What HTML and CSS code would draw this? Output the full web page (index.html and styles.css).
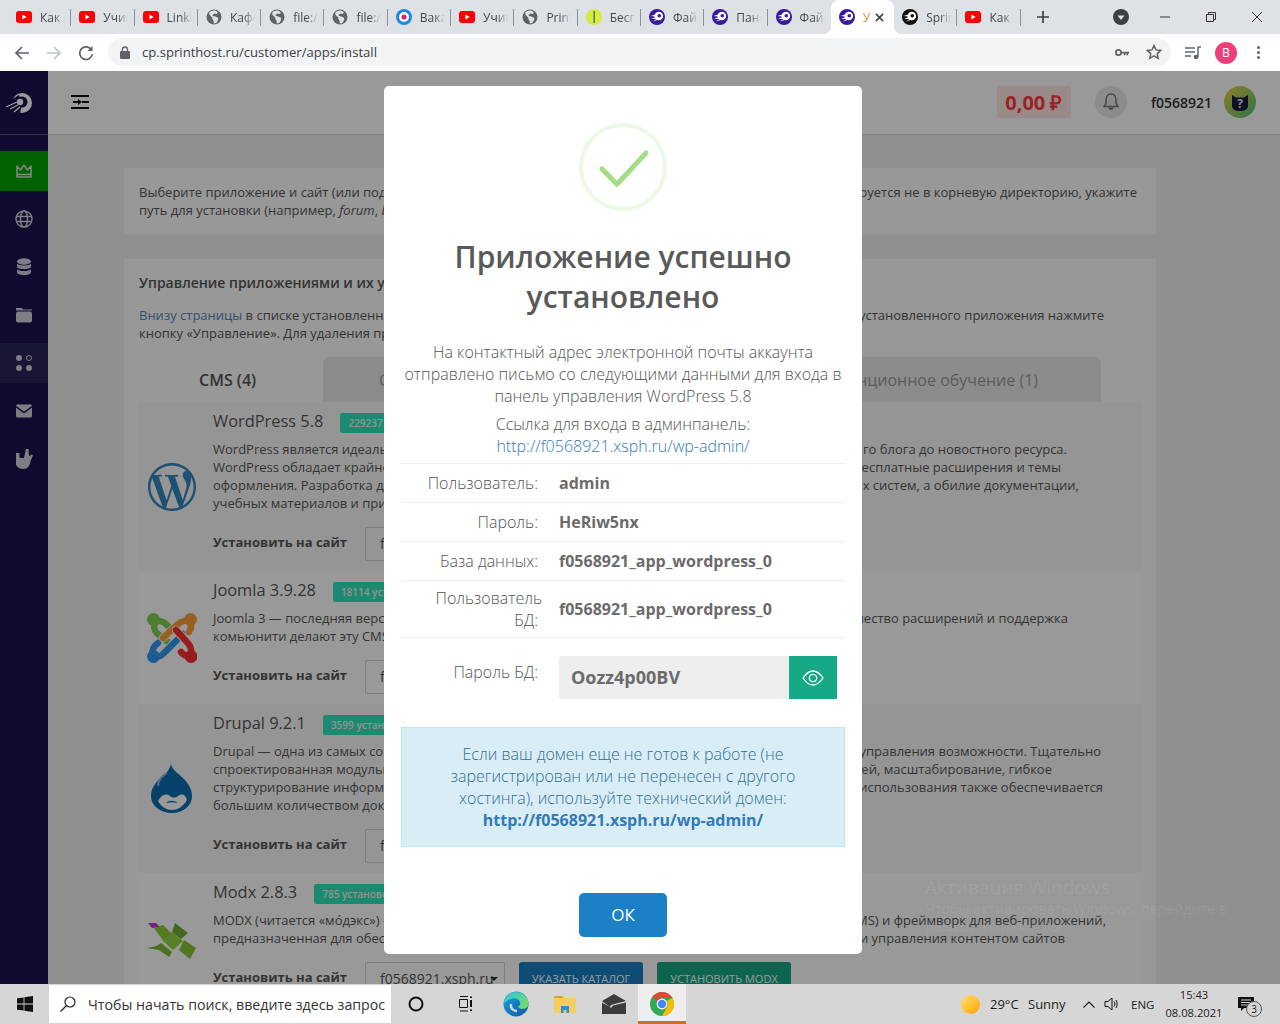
FILE: index.html
```html
<!DOCTYPE html>
<html lang="ru">
<head>
<meta charset="utf-8">
<title>Sprinthost</title>
<link rel="stylesheet" href="styles.css">
</head>
<body>
<svg class="sprite" width="0" height="0" aria-hidden="true">
  <symbol id="yt" viewBox="0 0 16 16"><rect x="0" y="2" width="16" height="12" rx="3" fill="#f00"/><path d="M6.400 5.400v5.200L10.600 8z" fill="#fff"/></symbol>
  <symbol id="globe" viewBox="0 0 16 16"><circle cx="8" cy="8" r="7.500" fill="#5f6368"/><path d="M8 1.500c-2 0-3.600.8-4.800 2.200l.3 2.300 2.700 2.400.3 2 1 1.200.3 3c1 0 2-.3 2.800-.8l1.300-2.600.4-2.200-2.800-1.600-2.300-.3-.8-1.100 1.100-.7 1-.9 2.400.5.9-1.400C10.700 2 9.400 1.500 8 1.500z" fill="#dee1e6"/></symbol>
  <symbol id="target" viewBox="0 0 16 16"><circle cx="8" cy="8" r="8" fill="#1e88e5"/><circle cx="8" cy="8" r="5" fill="#fff"/><circle cx="8" cy="8" r="2.500" fill="#e91e63"/></symbol>
  <symbol id="lime" viewBox="0 0 16 16"><circle cx="8" cy="8" r="8" fill="#d4ec3a"/><rect x="7.500" y="2" width="1.300" height="12" fill="#4a5a9a"/></symbol>
  <symbol id="comet" viewBox="0 0 16 16"><circle cx="8" cy="8" r="8" fill="currentColor"/><circle cx="9.800" cy="7" r="4.300" fill="#fff"/><circle cx="10.300" cy="6.800" r="1.800" fill="currentColor"/><path d="M1.500 7l5-1.500-.5 2zM2 10l5-2-.5 2zM4 12.500l4-3 .3 1.500z" fill="#fff"/></symbol>
</svg>

<div class="tabstrip">
  <div class="tab"><svg class="fav"><use href="#yt"/></svg><span class="tab-t">Как сделать</span></div>
  <div class="tab"><svg class="fav"><use href="#yt"/></svg><span class="tab-t">Учим</span></div>
  <div class="tab"><svg class="fav"><use href="#yt"/></svg><span class="tab-t">Linkin</span></div>
  <div class="tab"><svg class="fav"><use href="#globe"/></svg><span class="tab-t">Кафе</span></div>
  <div class="tab"><svg class="fav"><use href="#globe"/></svg><span class="tab-t">file:///</span></div>
  <div class="tab"><svg class="fav"><use href="#globe"/></svg><span class="tab-t">file:///</span></div>
  <div class="tab"><svg class="fav"><use href="#target"/></svg><span class="tab-t">Ваканс</span></div>
  <div class="tab"><svg class="fav"><use href="#yt"/></svg><span class="tab-t">Учим</span></div>
  <div class="tab"><svg class="fav"><use href="#globe"/></svg><span class="tab-t">Print</span></div>
  <div class="tab"><svg class="fav"><use href="#lime"/></svg><span class="tab-t">Бесп</span></div>
  <div class="tab"><svg class="fav purple"><use href="#comet"/></svg><span class="tab-t">Файл</span></div>
  <div class="tab"><svg class="fav purple"><use href="#comet"/></svg><span class="tab-t">Панель</span></div>
  <div class="tab pre-active"><svg class="fav purple"><use href="#comet"/></svg><span class="tab-t">Файл</span></div>
  <div class="tab active"><svg class="fav purple"><use href="#comet"/></svg><span class="tab-a">У</span><svg class="tab-x" viewBox="0 0 10 10"><path d="M1 1l8 8M9 1l-8 8"/></svg></div>
  <div class="tab"><svg class="fav black"><use href="#comet"/></svg><span class="tab-t">Sprint</span></div>
  <div class="tab"><svg class="fav"><use href="#yt"/></svg><span class="tab-t">Как с</span></div>
  <svg class="newtab" viewBox="0 0 14 14"><path d="M7 1v12M1 7h12"/></svg>
  <svg class="tabsearch" viewBox="0 0 16 16"><circle cx="8" cy="8" r="8" fill="#3c4043"/><path d="M4.500 6.500h7L8 11z" fill="#dee1e6"/></svg>
  <div class="winbtn"><svg viewBox="0 0 10 10"><path d="M0 5h10"/></svg></div>
  <div class="winbtn"><svg viewBox="0 0 10 10"><path d="M.5 2.500h7v7h-7zM2.500 2.500V.5h7v7h-2"/></svg></div>
  <div class="winbtn"><svg viewBox="0 0 10 10"><path d="M0 0l10 10M10 0L0 10"/></svg></div>
</div>

<div class="toolbar">
  <svg class="nav-ic" viewBox="0 0 16 16"><path d="M15 8H2M8 2L2 8l6 6"/></svg>
  <svg class="nav-ic off" viewBox="0 0 16 16"><path d="M1 8h13M8 2l6 6-6 6"/></svg>
  <svg class="nav-ic" viewBox="0 0 16 16"><path d="M13.500 5A6.300 6.300 0 1 0 14.300 9"/><path class="solid" d="M14.500 1v5h-5z"/></svg>
  <div class="omnibox">
    <svg class="lock" viewBox="0 0 10 13"><path d="M2.500 5V3.500a2.500 2.500 0 0 1 5 0V5" fill="none" stroke="#5f6368" stroke-width="1.300"/><rect y="5" width="10" height="8" rx="1" fill="#5f6368"/></svg>
    <span class="url">cp.sprinthost.ru/customer/apps/install</span>
    <svg class="key" viewBox="0 0 16 10"><circle cx="4" cy="5" r="3" fill="none" stroke="#5f6368" stroke-width="2"/><path d="M7 4h9v2h-1v2h-2V6h-1v2h-2V6H7z" fill="#5f6368"/></svg>
    <svg class="star" viewBox="0 0 16 16"><path d="M8 1.500l2 4.400 4.700.5-3.500 3.200 1 4.700L8 11.900l-4.200 2.400 1-4.700L1.300 6.400 6 5.900z"/></svg>
  </div>
  <svg class="media" viewBox="0 0 16 14"><path d="M0 2h10M0 6h10M0 10h6" stroke="#5f6368" stroke-width="1.500"/><path d="M13 1v10" stroke="#5f6368" stroke-width="1.500"/><path d="M13 1h3" stroke="#5f6368" stroke-width="1.500"/><circle cx="11" cy="11" r="2.300" fill="#5f6368"/></svg>
  <div class="profile">B</div>
  <div class="dots"><i></i><i></i><i></i></div>
</div>

<div class="page">
  <aside class="sidebar">
    <div class="side-logo">
      <svg viewBox="0 0 28 22" width="28" height="22"><circle cx="17" cy="11" r="10" fill="#fff"/><path d="M6 8l8-5 3 9-2 9-9-2z" fill="#19124e"/><circle cx="17" cy="10" r="5.500" fill="#19124e"/><circle cx="15" cy="10" r="3.200" fill="#fff"/><path d="M1 15l11-5M5 17l8-4M9 20l6-5" stroke="#fff" stroke-width="1.300"/></svg>
    </div>
    <nav class="side-nav">
      <div class="side-item on"><svg class="crown" viewBox="0 0 16 14"><path d="M1 2l3.500 4L8 1l3.500 5L15 2v11H1zM1 10.500h14" fill="none" stroke="#d5e8d5" stroke-width="1.500" stroke-linejoin="round"/></svg></div>
      <div class="side-item"><svg class="wide" viewBox="0 0 18 18"><g fill="none" stroke="#d0d0da" stroke-width="1.500"><circle cx="9" cy="9" r="8"/><ellipse cx="9" cy="9" rx="3.500" ry="8"/><path d="M1 6.500h16M1 11.500h16"/></g></svg></div>
      <div class="side-item"><svg viewBox="0 0 16 18"><ellipse cx="8" cy="3.500" rx="7" ry="3.300" fill="#d0d0da"/><path d="M1 5.500c1 2.500 13 2.500 14 0V9c-1 2.800-13 2.800-14 0zM1 11c1 2.700 13 2.700 14 0v3.500c-1 3.500-13 3.500-14 0z" fill="#d0d0da"/></svg></div>
      <div class="side-item"><svg viewBox="0 0 16 16"><path d="M0 1h6l1 1.500h9v1H0z" fill="#d0d0da"/><rect y="4.500" width="16" height="11" rx="2" fill="#d0d0da"/></svg></div>
      <div class="side-item hover"><svg viewBox="0 0 16 16"><circle cx="3" cy="3" r="3" fill="#d0d0da"/><circle cx="13" cy="3" r="2.500" fill="none" stroke="#d0d0da"/><circle cx="3" cy="13" r="3" fill="#d0d0da"/><circle cx="13" cy="13" r="3" fill="#d0d0da"/></svg></div>
      <div class="side-item"><svg viewBox="0 0 16 13"><rect width="16" height="13" rx="1.500" fill="#d0d0da"/><path d="M0 2l8 6 8-6" fill="none" stroke="#19124e" stroke-width="1.400"/></svg></div>
      <div class="side-item"><svg class="hand" viewBox="0 0 17 20"><path d="M0 4h3.500v4.500c1.500.6 3 .6 4.500.3L10 0h2.500l.5 7 3-1.500 1 1-2.500 5.500c-.5 4.500-3 8-7 8-4.500 0-8-2.500-8-7z" fill="#d0d0da"/></svg></div>
    </nav>
  </aside>

  <div class="main">
    <header class="topbar">
      <svg class="burger" viewBox="0 0 18 14"><path d="M0 1h18M0 13h18M11 7h7M2 7h6" stroke="#111" stroke-width="2"/><path d="M7 4l4 3-4 3z" fill="#111"/></svg>
      <div class="balance">0,00 ₽</div>
      <div class="bell"><svg viewBox="0 0 16 20" width="16" height="20"><path d="M8 2c3 0 5 2.500 5 6v3.500l2 3H1l2-3V8c0-3.500 2-6 5-6z" fill="none" stroke="#777" stroke-width="1.500"/><path d="M5.500 15.500h5a2.500 2.500 0 0 1-5 0z" fill="#777"/></svg></div>
      <div class="user">f0568921</div>
      <div class="avatar"><svg viewBox="0 0 32 32" width="32" height="32"><path d="M8 9l4 2.500h8L24 9v11c0 3-3 5-8 5s-8-2-8-5z" fill="#1c1c40"/><text class="avatar-q" x="16" y="22" text-anchor="middle">?</text></svg></div>
    </header>

    <div class="content">
      <section class="card">
        <div class="line pr4"><span>Выберите приложение и сайт (или под</span><span>ируется не в корневую директорию, укажите</span></div>
        <div class="line"><span>путь для установки (например, <em>forum</em>, <em>blog</em>)</span></div>
      </section>

      <section class="card tall">
        <h2 class="card-h">Управление приложениями и их установка</h2>
        <div class="line pr37"><span><a class="lnk">Внизу страницы</a> в списке установленных</span><span>установленного приложения нажмите</span></div>
        <div class="line"><span>кнопку «Управление». Для удаления приложения</span></div>

        <div class="tabs">
          <div class="ptab on">CMS (4)</div>
          <div class="ptab mid">С</div>
          <div class="ptab end">Дистанционное обучение (1)</div>
        </div>

        <article class="app alt">
          <div class="app-logo">
            <svg viewBox="0 0 24 24" width="48" height="48"><path fill="#3285be" d="M21.469 6.825c.84 1.537 1.318 3.3 1.318 5.175 0 3.979-2.156 7.456-5.363 9.325l3.295-9.527c.615-1.54.82-2.771.82-3.864 0-.405-.026-.78-.07-1.11m-7.981.105c.647-.03 1.232-.105 1.232-.105.582-.075.514-.93-.067-.899 0 0-1.755.135-2.88.135-1.064 0-2.85-.15-2.85-.15-.585-.03-.661.855-.075.885 0 0 .54.061 1.125.09l1.68 4.605-2.37 7.08L5.354 6.9c.649-.03 1.234-.1 1.234-.1.585-.075.516-.93-.065-.896 0 0-1.746.138-2.874.138-.2 0-.438-.008-.69-.015C4.911 3.15 8.235 1.215 12 1.215c2.809 0 5.365 1.072 7.286 2.833-.046-.003-.091-.009-.141-.009-1.06 0-1.812.923-1.812 1.914 0 .89.513 1.643 1.06 2.531.411.72.89 1.643.89 2.977 0 .915-.354 1.994-.821 3.479l-1.075 3.585-3.9-11.61.001.014zM12 22.784c-1.059 0-2.081-.153-3.048-.437l3.237-9.406 3.315 9.087c.024.053.05.101.078.149-1.12.393-2.325.609-3.582.609M1.211 12c0-1.564.336-3.05.935-4.39L7.29 21.709C3.694 19.96 1.212 16.271 1.211 12M12 0C5.385 0 0 5.385 0 12s5.385 12 12 12 12-5.385 12-12S18.615 0 12 0"/></svg>
          </div>
          <div class="app-body">
            <div class="app-head"><h3>WordPress 5.8</h3><span class="badge">229237 установок</span></div>
            <div class="line pr74"><span>WordPress является идеальной</span><span>го блога до новостного ресурса.</span></div>
            <div class="line pr80"><span>WordPress обладает крайне</span><span>бесплатные расширения и темы</span></div>
            <div class="line pr62"><span>оформления. Разработка для</span><span>х систем, а обилие документации,</span></div>
            <div class="line"><span>учебных материалов и примеров</span></div>
            <div class="install"><b>Установить на сайт</b><div class="sel">f0568921.xsph.ru</div></div>
          </div>
        </article>

        <article class="app">
          <div class="app-logo">
            <svg viewBox="0 0 50 50" width="50" height="50"><g fill="none" stroke-linecap="round">
              <path d="M21 13C17 8 12 7 9 9 6 13 7 18 11 21l10 8" stroke="#7fd050" stroke-width="6.500"/>
              <path d="M11 30c-4 3-6 7-5 10 3 4 7 4 10 1l20-20" stroke="#fff" stroke-width="8.500"/>
              <path d="M11 30c-4 3-6 7-5 10 3 4 7 4 10 1l20-20" stroke="#3398f0" stroke-width="6.500"/>
              <path d="M16 25l14-13c5-5 10-5 12-3 3 3 2 7 0 10" stroke="#fff" stroke-width="8.500"/>
              <path d="M16 25l14-13c5-5 10-5 12-3 3 3 2 7 0 10" stroke="#ff9f3a" stroke-width="6.500"/>
              <path d="M29 17l10 11c4 4 6 8 5 12-3 4-7 3-10-1" stroke="#fff" stroke-width="8.500"/>
              <path d="M29 17l10 11c4 4 6 8 5 12-3 4-7 3-10-1" stroke="#ff2e2e" stroke-width="6.500"/></g>
              <circle cx="6.500" cy="6.500" r="6.500" fill="#7fd050"/><circle cx="43.500" cy="6.500" r="6.500" fill="#ff9f3a"/><circle cx="44" cy="43.500" r="6.500" fill="#ff2e2e"/><circle cx="6.500" cy="43.500" r="6.500" fill="#3398f0"/></svg>
          </div>
          <div class="app-body">
            <div class="app-head"><h3>Joomla 3.9.28</h3><span class="badge">18114 установок</span></div>
            <div class="line pr73"><span>Joomla 3 — последняя версия</span><span>чество расширений и поддержка</span></div>
            <div class="line"><span>комьюнити делают эту CMS</span></div>
            <div class="install"><b>Установить на сайт</b><div class="sel">f0568921.xsph.ru</div></div>
          </div>
        </article>

        <article class="app alt">
          <div class="app-logo">
            <svg viewBox="0 0 44 50" width="44" height="50"><path d="M21 0c1 6 7 9 13 15 5 5 8 11 8 17 0 10-9 17-20 17S1 42 1 32c0-7 4-13 9-17 5-4 9-8 11-15z" fill="#0a6fb0"/><path d="M8 37c3-6 8-8 12-5 3 2 5 2 8 0 4-3 8-1 9 4-4 7-10 10-15 10s-11-3-14-9z" fill="#fff"/><path d="M16 39c3-3 8-3 12 0-4-1-8-1-12 0z" fill="#0a6fb0"/><path d="M17 9c-5 3-9 8-9 13" fill="none" stroke="#7fb6da" stroke-width="2"/></svg>
          </div>
          <div class="app-body">
            <div class="app-head"><h3>Drupal 9.2.1</h3><span class="badge">3599 установок</span></div>
            <div class="line pr40"><span>Drupal — одна из самых современных</span><span>управления возможности. Тщательно</span></div>
            <div class="line pr89"><span>спроектированная модульная</span><span>ей, масштабирование, гибкое</span></div>
            <div class="line pr38"><span>структурирование информации</span><span>использования также обеспечивается</span></div>
            <div class="line"><span>большим количеством документации</span></div>
            <div class="install"><b>Установить на сайт</b><div class="sel">f0568921.xsph.ru</div></div>
          </div>
        </article>

        <article class="app">
          <div class="app-logo">
            <svg viewBox="0 0 50 38" width="50" height="38"><path d="M1 2h8l4 4-8 1z" fill="#c23ad8"/><path d="M7 7l9-3 9 9-8 8z" fill="#8ccc3c"/><path d="M28 2l13 10-7 6-9-7z" fill="#6fb034"/><path d="M25 11l11 9-10 9-10-9z" fill="#92d644"/><path d="M37 19l12 8-6 11-11-9z" fill="#86c63a"/><path d="M14 22l11 9-3 5-10-7-12-2c4-1 10-1 14-5z" fill="#7cbc36"/></svg>
          </div>
          <div class="app-body">
            <div class="app-head"><h3>Modx 2.8.3</h3><span class="badge">785 установок</span></div>
            <div class="line pr35"><span>MODX (читается «мо́дэкс») — это</span><span>(CMS) и фреймворк для веб-приложений,</span></div>
            <div class="line pr76"><span>предназначенная для обеспечения</span><span>и управления контентом сайтов</span></div>
            <div class="install"><b>Установить на сайт</b><div class="sel">f0568921.xsph.ru<i class="caret"></i></div><button class="btn blue">Указать каталог</button><button class="btn teal">Установить MODX</button></div>
          </div>
        </article>
      </section>
    </div>
  </div>

  <div class="overlay">
    <div class="modal">
      <svg class="okicon" viewBox="0 0 88 88" width="88" height="88"><circle cx="44" cy="44" r="42" fill="none" stroke="#edf8e7" stroke-width="4"/><path d="M23 46l15 15.300L67 30" fill="none" stroke="#a5dc86" stroke-width="5" stroke-linecap="round" stroke-linejoin="round"/></svg>
      <h1 class="m-title">Приложение успешно установлено</h1>
      <p class="m-p first">На контактный адрес электронной почты аккаунта отправлено письмо со следующими данными для входа в панель управления WordPress 5.8</p>
      <p class="m-p">Ссылка для входа в админпанель:<br><a class="m-link">http://f0568921.xsph.ru/wp-admin/</a></p>
      <div class="rows">
        <div class="row"><div class="r-l">Пользователь:</div><div class="r-v">admin</div></div>
        <div class="row"><div class="r-l">Пароль:</div><div class="r-v">HeRiw5nx</div></div>
        <div class="row"><div class="r-l">База данных:</div><div class="r-v">f0568921_app_wordpress_0</div></div>
        <div class="row two"><div class="r-l"><span class="hang">Пользователь</span><br>БД:</div><div class="r-v">f0568921_app_wordpress_0</div></div>
        <div class="row pass"><div class="r-l">Пароль БД:</div>
          <div class="passbox"><div class="passval">Oozz4p00BV</div><div class="eye"><svg viewBox="0 0 22 16" width="22" height="16"><path d="M1 8c3-4.500 6.500-7 10-7s7 2.500 10 7c-3 4.500-6.500 7-10 7S4 12.500 1 8z" fill="none" stroke="#fff" stroke-width="1.300"/><circle cx="11" cy="8" r="3.700" fill="none" stroke="#fff" stroke-width="1.300"/></svg></div></div>
        </div>
      </div>
      <div class="info">Если ваш домен еще не готов к работе (не зарегистрирован или не перенесен с другого хостинга), используйте технический домен:<br><a class="info-link">http://f0568921.xsph.ru/wp-admin/</a></div>
      <button class="ok">ОК</button>
    </div>
  </div>

  <div class="watermark">
    <div class="wm-h">Активация Windows</div>
    <div class="wm-t">Чтобы активировать Windows, перейдите в<br>раздел "Параметры".</div>
  </div>
</div>

<footer class="taskbar">
  <div class="start"><svg viewBox="0 0 16 16" width="16" height="16"><path d="M0 2.300l6.600-.9v6.200H0zM7.400 1.300L16 0v7.600H7.400zM0 8.400h6.600v6.200L0 13.700zM7.400 8.400H16V16l-8.600-1.200z" fill="#111"/></svg></div>
  <div class="search"><svg viewBox="0 0 16 16" width="16" height="16"><circle cx="10" cy="6" r="5" fill="none" stroke="#222" stroke-width="1.200"/><path d="M6.300 9.700L.5 15.500" stroke="#222" stroke-width="1.300"/></svg><span>Чтобы начать поиск, введите здесь запрос</span></div>
  <div class="tb-app cortana"><svg viewBox="0 0 16 16" width="16" height="16"><circle cx="8" cy="8" r="6.500" fill="none" stroke="#111" stroke-width="2"/></svg></div>
  <div class="tb-app tview"><svg viewBox="0 0 16 16" width="16" height="16"><path d="M3 .5h8M2.500 3.500h8v8h-8zM3 15h8" fill="none" stroke="#111"/><path d="M13 .5h2v1.500h-2zM13 4h2v7h-2zM13 13.500h2V15h-2z" fill="#111"/></svg></div>
  <div class="tb-app"><svg viewBox="0 0 26 26" width="26" height="26"><defs><linearGradient id="edge" x1="0" y1="0" x2="1" y2="1"><stop offset="0" stop-color="#1ba0e2"/><stop offset="1" stop-color="#0c59a4"/></linearGradient><linearGradient id="edge2" x1="0" y1="0" x2="1" y2="1"><stop offset="0" stop-color="#2fc6d8"/><stop offset="1" stop-color="#7fe05a"/></linearGradient></defs><circle cx="13" cy="13" r="12.500" fill="url(#edge)"/><path d="M13 1c7 0 12 5 12.500 11 .3 4-2.500 6-6 6-2 0-4-1-4.500-2.500 3-1 3.500-5.500-1-7.500C9 6.500 3 9 1 13 1.500 6 6.500 1 13 1z" fill="url(#edge2)"/><path d="M8 13c-1 4 2 7 6 7" fill="none" stroke="#d6d6d6" stroke-width="2.500"/></svg></div>
  <div class="tb-app"><svg viewBox="0 0 22 18" width="22" height="18"><path d="M0 2a1 1 0 0 1 1-1h7l2 2H0z" fill="#d8a21e"/><rect y="3" width="22" height="15" rx="1" fill="#f4cf5c"/><path d="M7 11h8v7h-2.500v-3h-3v3H7z" fill="#2d8fd8"/></svg></div>
  <div class="tb-app"><svg viewBox="0 0 24 20" width="24" height="20"><path d="M0 7l12-7 12 7-15 4-1 2z" fill="#3c3c3c"/><path d="M0 8.500l8 4.500 1 1 2-2.500L24 8.500V20H0z" fill="#3c3c3c"/></svg></div>
  <div class="tb-app chrome"><svg viewBox="0 0 24 24" width="24" height="24"><circle cx="12" cy="12" r="12" fill="#34a853"/><path d="M12 0a12 12 0 0 1 10.400 6H12a6 6 0 0 0-5.200 3L2.500 4.700A12 12 0 0 1 12 0z" fill="#ea4335"/><path d="M22.400 6A12 12 0 0 1 12 24l4.800-8.500A6 6 0 0 0 17 9z" fill="#fbbc05"/><circle cx="12" cy="12" r="5.400" fill="#fff"/><circle cx="12" cy="12" r="4.200" fill="#4285f4"/></svg></div>
  <div class="tray">
    <span class="sun"></span>
    <span class="temp">29°C</span>
    <span class="sunny">Sunny</span>
    <svg class="chev" viewBox="0 0 12 7" width="12" height="7"><path d="M.5 6.500L6 1l5.500 5.500" fill="none" stroke="#111" stroke-width="1.100"/></svg>
    <svg class="spk" viewBox="0 0 16 14" width="16" height="14"><path d="M1 4.500h3L8 1v12L4 9.500H1z" fill="none" stroke="#111"/><path d="M10 4.500c1 1.500 1 3.500 0 5M12 3c1.500 2.500 1.500 5.500 0 8" fill="none" stroke="#111"/></svg>
    <span class="lang">ENG</span>
    <div class="clock"><span>15:43</span><span>08.08.2021</span></div>
    <div class="notif"><svg viewBox="0 0 16 15" width="16" height="15"><path d="M0 0h16v11H6l-3 3v-3H0z" fill="#111"/><path d="M3 3h10M3 5.500h10M3 8h7" stroke="#d6d6d6"/></svg><span class="notif-n">3</span></div>
  </div>
</footer>
</body>
</html>
```
FILE: styles.css
```css
* { box-sizing: border-box; }
html, body { margin: 0; padding: 0; }
body {
  width: 1280px; height: 1024px; overflow: hidden;
  display: flex; flex-direction: column;
  font-family: "Open Sans", "Liberation Sans", sans-serif;
  background: #fff;
}
.sprite { position: absolute; }

/* browser tabs */
.tabstrip { height: 34px; flex: none; background: #dee1e6; display: flex; align-items: center; padding-left: 8px; }
.tab {
  width: 63.3px; height: 34px; flex: none; position: relative;
  display: flex; align-items: center; padding-left: 8px; gap: 8px;
  font-size: 12px; color: #45494d;
}
.tab::after { content: ""; position: absolute; right: 0; top: 9px; height: 17px; width: 1px; background: #8f9296; }
.tab.active::after, .tab.pre-active::after { display: none; }
.tab.active { background: #fff; border-radius: 8px 8px 0 0; }
.tab.active::before {
  content: ""; position: absolute; left: -8px; right: -8px; bottom: 0; height: 8px;
  background:
    radial-gradient(circle at 0 0, #dee1e6 8px, #fff 8.5px) left bottom / 8px 8px no-repeat,
    radial-gradient(circle at 100% 0, #dee1e6 8px, #fff 8.5px) right bottom / 8px 8px no-repeat;
}
.fav { width: 16px; height: 16px; flex: none; }
.purple { color: #3a1a9c; }
.black { color: #111; }
.tab-t {
  width: 25px; overflow: hidden; white-space: nowrap;
  -webkit-mask-image: linear-gradient(90deg, #000 55%, transparent 100%);
  mask-image: linear-gradient(90deg, #000 55%, transparent 100%);
}
.tab-a { width: 8px; overflow: hidden; color: #c59a3c; }
.tab-x { width: 9px; height: 9px; fill: none; stroke: #3c4043; stroke-width: 1.700; margin-left: -4px; }
.newtab { width: 14px; height: 14px; fill: none; stroke: #3c4043; stroke-width: 1.700; margin-left: 15px; }
.tabsearch { width: 16px; height: 16px; margin-left: auto; margin-right: 13px; }
.winbtn { width: 46px; height: 34px; display: flex; align-items: center; justify-content: center; }
.winbtn svg { width: 10px; height: 10px; fill: none; stroke: #222; stroke-width: .9; }

/* browser toolbar */
.toolbar { height: 37px; flex: none; background: #fff; display: flex; align-items: center; padding-left: 14px; }
.nav-ic { width: 16px; height: 16px; flex: none; fill: none; stroke: #5f6368; stroke-width: 1.700; margin-right: 16px; }
.nav-ic.off { stroke: #bfc2c6; }
.nav-ic .solid { fill: #5f6368; stroke: none; }
.omnibox {
  width: 1063px; height: 28px; margin: -1px 0 0 -2px; background: #f1f3f4; border-radius: 14px;
  display: flex; align-items: center; padding-left: 12px;
}
.lock { width: 10px; height: 13px; margin-right: 12px; flex: none; }
.url { font-size: 13.100px; color: #3c4043; }
.key { width: 14px; height: 9px; margin-left: auto; }
.star { width: 16px; height: 16px; margin: 0 9px 0 17px; fill: none; stroke: #5f6368; stroke-width: 1.500; }
.media { width: 16px; height: 14px; margin-left: 14px; fill: none; }
.profile {
  width: 22px; height: 22px; border-radius: 50%; margin-left: 14px; background: #ee3f7b;
  color: #fff; font-size: 12px; display: flex; align-items: center; justify-content: center;
}
.dots { display: flex; flex-direction: column; gap: 2px; margin-left: 20px; }
.dots i { width: 3px; height: 3px; border-radius: 50%; background: #5f6368; }

/* cp page */
.page { flex: 1; min-height: 0; position: relative; display: flex; overflow: hidden; background: #f0f0f0; }
.sidebar { width: 48px; flex: none; background: #19124e; }
.side-logo { height: 64px; border-bottom: 1px solid #5a5678; display: flex; align-items: center; padding-left: 5px; }
.side-nav { padding-top: 16px; display: flex; flex-direction: column; gap: 8px; }
.side-item { height: 40px; display: flex; align-items: center; justify-content: center; }
.side-item svg { width: 16px; height: 18px; }
.side-item svg.wide { width: 18px; }
.side-item svg.crown { height: 14px; }
.side-item svg.hand { width: 17px; height: 20px; }
.side-item.on { background: #00a600; }
.side-item.hover { background: #2a2458; }

.main { flex: 1; min-width: 0; display: flex; flex-direction: column; }
.topbar {
  height: 64px; flex: none; background: #fff; border-bottom: 1px solid #d8d8d8;
  display: flex; align-items: center; padding: 0 24px 1px 23px;
}
.burger { width: 18px; height: 14px; margin-right: auto; }
.balance {
  width: 74px; height: 32px; border-radius: 3px; background: #ffe6e6; color: #ff3a3a;
  font-size: 20px; font-weight: 700; display: flex; align-items: center; justify-content: center;
}
.bell { width: 32px; height: 32px; border-radius: 50%; background: #e8e8e8; margin-left: 24px; display: flex; align-items: center; justify-content: center; }
.user { font-size: 14px; font-weight: 600; color: #333; margin-left: 24px; }
.avatar { width: 32px; height: 32px; border-radius: 50%; margin-left: 12px; background: linear-gradient(135deg, #f0d040, #6cc66c 80%); }
.avatar-q { font-size: 12px; font-weight: 700; fill: #e0e0e0; }

.content { flex: 1; min-height: 0; padding: 33px 124px 0 76px; display: flex; flex-direction: column; gap: 25px; }
.card { background: #fdfdfd; padding: 15px; font-size: 13px; line-height: 18px; color: #585858; }
.line { display: flex; justify-content: space-between; white-space: nowrap; height: 18px; }
.pr4 { padding-right: 4px; } .pr35 { padding-right: 35px; } .pr37 { padding-right: 37px; } .pr38 { padding-right: 38px; }
.pr40 { padding-right: 40px; } .pr62 { padding-right: 62px; } .pr73 { padding-right: 73px; } .pr74 { padding-right: 74px; }
.pr76 { padding-right: 76px; } .pr80 { padding-right: 80px; } .pr89 { padding-right: 89px; }
.card-h { margin: 0 0 14px; font-size: 14px; line-height: 18px; font-weight: 600; color: #555; }
.lnk { color: #5a86b4; }

.tabs { display: flex; height: 45px; margin: 15px 40px 0 0; }
.ptab { font-size: 16px; line-height: 47px; white-space: nowrap; }
.ptab.on { width: 184px; padding-left: 60px; background: #fdfdfd; font-weight: 600; color: #555; border-radius: 6px 6px 0 0; }
.ptab.mid { flex: 1; padding-left: 56px; background: #e9e9e9; color: #999; border-radius: 6px 0 0 0; }
.ptab.end { padding: 0 63px 0 60px; background: #e9e9e9; color: #999; border-radius: 0 6px 0 0; }

.app { display: flex; align-items: center; background: #fff; }
.app.alt { background: #f9f9f9; }
.app-logo { width: 74px; flex: none; display: flex; justify-content: center; padding-right: 8px; }
.app-body { flex: 1; min-width: 0; padding: 8px 0 10px; }
.app-head { display: flex; align-items: center; height: 24px; margin-bottom: 6px; gap: 17px; }
.app-head h3 { margin: 0 0 2px; font-size: 16.400px; line-height: 24px; font-weight: 500; color: #585858; }
.badge { height: 20px; margin-top: 2px; padding: 0 8px; border-radius: 2px; background: #2ee6bb; color: #f2f2f2; font-size: 10px; font-weight: 600; line-height: 20px; white-space: nowrap; }
.install { display: flex; align-items: center; margin-top: 15px; height: 34px; }
.install b { width: 152px; margin-bottom: 4px; font-size: 13px; font-weight: 700; color: #585858; }
.sel { width: 140px; height: 34px; border: 1px solid #d2d2d2; border-radius: 2px; padding-left: 14px; font-size: 14px; line-height: 31px; color: #585858; position: relative; white-space: nowrap; }
.caret { position: absolute; right: 6px; top: 14px; border: 4px solid transparent; border-top-color: #333; }
.btn { height: 34px; padding: 0 0 2px; border: 0; border-radius: 3px; margin-left: 14px; color: #fff; font: 11px "Open Sans", sans-serif; text-transform: uppercase; }
.btn.blue { width: 124px; background: #1a7fc4; }
.btn.teal { width: 134px; background: #17a886; }

/* modal */
.overlay { position: absolute; inset: 0; background: rgba(0,0,0,.4); display: flex; justify-content: center; align-items: flex-start; padding: 15px 34px 0 0; }
.modal { width: 478px; height: 868px; background: #fff; border-radius: 5px; padding: 37px 17px 0; text-align: center; display: flex; flex-direction: column; align-items: center; }
.okicon { flex: none; }
.m-title { margin: 26px 0 0; font-size: 30px; line-height: 40px; font-weight: 600; color: #595959; width: 400px; }
.m-p { margin: 6px 0 0; font-size: 16px; line-height: 22px; font-weight: 300; color: #545454; }
.m-p.first { margin-top: 24px; }
.m-link { color: #337ab7; }
.rows { width: 444px; margin-top: 6px; }
.row { display: flex; align-items: center; min-height: 39px; border-top: 1px solid #eee; font-size: 16px; line-height: 22px; color: #545454; }
.row.two { height: 57px; }
.row.pass { align-items: flex-start; border-top: 1px solid #eee; padding-top: 18px; height: 62px; }
.r-l { width: 137px; text-align: right; font-weight: 300; flex: none; }
.row.pass .r-l { padding-top: 5px; }
.hang { display: inline-block; margin-right: -4px; }
.r-v { margin-left: 21px; font-weight: 700; color: #6b6b6b; }
.passbox { margin-left: 21px; display: flex; width: 278px; height: 43px; }
.passval { flex: 1; background: #eee; border-radius: 3px 0 0 3px; padding-left: 12px; font-size: 18px; line-height: 43px; font-weight: 700; color: #6b6b6b; text-align: left; }
.eye { width: 48px; background: #17a886; display: flex; align-items: center; justify-content: center; }
.info { width: 444px; height: 120px; margin-top: 28px; padding: 15px 30px; background: #d9edf7; border: 1px solid #bce8f1; color: #31708f; font-size: 16px; line-height: 22px; font-weight: 300; }
.info-link { color: #337ab7; font-weight: 700; }
.ok { width: 88px; height: 44px; margin-top: 46px; padding: 0 0 2px; border: 0; border-radius: 5px; background: #1b80c6; color: #fff; font: 17px "Open Sans", sans-serif; flex: none; }

.watermark { position: absolute; left: 925px; top: 803px; color: rgba(255,255,255,.09); }
.wm-h { font-size: 19px; line-height: 26px; }
.wm-t { font-size: 14.200px; line-height: 17px; }

/* windows taskbar */
.taskbar { height: 40px; flex: none; background: #d6d6d6; display: flex; align-items: center; position: relative; }
.start { width: 49px; height: 40px; display: flex; align-items: center; justify-content: center; }
.search { width: 342px; height: 38px; background: #fff; display: flex; align-items: center; gap: 12px; padding-left: 11px; font-size: 14.200px; color: #333; white-space: nowrap; overflow: hidden; }
.tb-app { width: 49px; height: 40px; display: flex; align-items: center; justify-content: center; flex: none; }
.tb-app.cortana { width: 50px; }
.tb-app.tview { width: 50px; padding-right: 3px; }
.tb-app.chrome { width: 48px; background: #eee; border-bottom: 3px solid #c87137; padding-top: 3px; }
.tray { flex: 1; display: flex; align-items: center; font-size: 13px; color: #222; }
.sun { width: 19px; height: 19px; border-radius: 50%; background: linear-gradient(135deg, #ffe070, #ffa500); margin-left: 275px; flex: none; }
.temp { margin-left: 10px; width: 38px; flex: none; }
.sunny { width: 55px; flex: none; }
.chev { flex: none; }
.spk { margin-left: 9px; flex: none; }
.lang { margin-left: 11px; width: 23px; font-size: 11.500px; flex: none; }
.clock { width: 54px; margin-left: 13px; flex: none; display: flex; flex-direction: column; align-items: center; font-size: 11.200px; line-height: 18px; }
.notif { position: relative; margin-left: 17px; display: flex; }
.notif-n { position: absolute; left: 8px; top: 4px; width: 16px; height: 16px; border-radius: 50%; border: 1px solid #555; font-size: 10px; line-height: 14px; text-align: center; background: #d6d6d6; }
```
